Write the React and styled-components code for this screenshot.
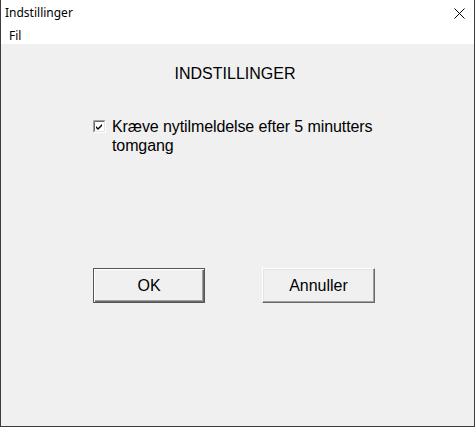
import styled, { createGlobalStyle } from "styled-components"

const Global = createGlobalStyle`
    html, body {
        margin: 0;
        padding: 0;
        background: #f0f0f0;
    }
`

const Window = styled.div`
    width: 475px;
    height: 427px;
    box-sizing: border-box;
    border: 1px solid #3c3c3c;
    border-top: none;
    background: #f0f0f0;
    display: flex;
    flex-direction: column;
    font-family: Arial, "Liberation Sans", sans-serif;
    color: #000;
`

const TitleBar = styled.div`
    height: 27px;
    background: #fff;
    display: flex;
    align-items: center;
    justify-content: space-between;
    padding: 0 0 0 4px;
    font-family: "Noto Sans", "Open Sans", sans-serif;
    font-size: 12px;
`

const TitleText = styled.span`
    margin-top: -2px;
`

const CloseBox = styled.div`
    width: 30px;
    height: 27px;
    display: flex;
    align-items: center;
    justify-content: center;
    margin-top: -1px;
`

const MenuBar = styled.div`
    height: 17px;
    background: #fff;
    display: flex;
    align-items: center;
    padding-left: 8px;
    font-family: "Noto Sans", "Open Sans", sans-serif;
    font-size: 12px;
`

const Content = styled.div`
    flex: 1;
    display: flex;
    flex-direction: column;
    padding-top: 21px;
`

const Heading = styled.div`
    text-align: center;
    font-size: 16px;
    line-height: 18px;
    padding-right: 5px;
`

const CheckRow = styled.label`
    display: flex;
    align-items: flex-start;
    margin: 34px 0 0 92px;
    width: 290px;
    font-size: 16px;
    letter-spacing: -0.1px;
    line-height: 19px;
`

const Box = styled.svg`
    flex: none;
    margin: 3px 6px 0 0;
`

const ButtonRow = styled.div`
    display: flex;
    gap: 57px;
    margin: 113px 0 0 92px;
`

const Button = styled.button`
    width: ${p => p.w}px;
    height: 35px;
    box-sizing: border-box;
    background: #f0f0f0;
    font-family: Arial, "Liberation Sans", sans-serif;
    font-size: 16px;
    color: #000;
    padding: 0;
    border: 1px solid;
    border-color: ${p => p.primary ? "#555" : "#fff #696969 #696969 #fff"};
    box-shadow: ${p => p.primary
        ? "inset 1px 1px 0 #fff, inset -1px -1px 0 #696969, inset -2px -2px 0 #a0a0a0"
        : "inset -1px -1px 0 #a0a0a0, inset 1px 1px 0 #e3e3e3"};
`

function Checkbox() {
    return (
        <Box width="13" height="13" viewBox="0 0 13 13">
            <rect x="0" y="0" width="13" height="13" fill="#fff" />
            <path d="M0.5 12.5V0.5H12.5" stroke="#a0a0a0" fill="none" />
            <path d="M1.5 11.5V1.5H11.5" stroke="#696969" fill="none" />
            <path d="M0.5 12.5H12.5V0.5" stroke="#fff" fill="none" />
            <path d="M1.5 11.5H11.5V1.5" stroke="#e3e3e3" fill="none" />
            <path d="M3 6l2 2 4-4v2l-4 4-2-2z" fill="#000" />
        </Box>
    )
}

export default function App() {
    return (
        <Window>
            <Global />
            <TitleBar>
                <TitleText>Indstillinger</TitleText>
                <CloseBox>
                    <svg width="11" height="11" viewBox="0 0 11 11">
                        <path d="M0.5 0.5L10.5 10.5M10.5 0.5L0.5 10.5" stroke="#000" strokeWidth="1" />
                    </svg>
                </CloseBox>
            </TitleBar>
            <MenuBar>Fil</MenuBar>
            <Content>
                <Heading>INDSTILLINGER</Heading>
                <CheckRow>
                    <Checkbox />
                    <span>Kræve nytilmeldelse efter 5 minutters tomgang</span>
                </CheckRow>
                <ButtonRow>
                    <Button primary w={112}>OK</Button>
                    <Button w={113}>Annuller</Button>
                </ButtonRow>
            </Content>
        </Window>
    )
}
